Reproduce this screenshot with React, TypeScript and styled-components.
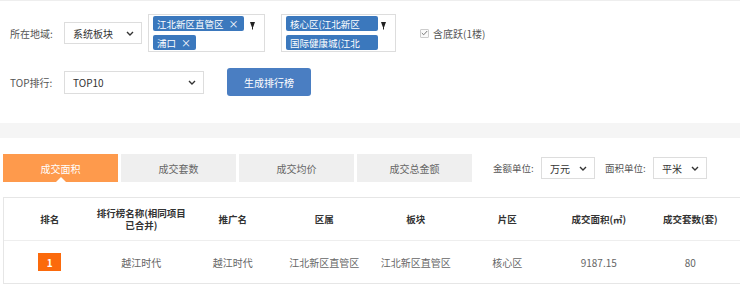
import styled, { createGlobalStyle } from "styled-components";

const GlobalStyle = createGlobalStyle`
  body {
    margin: 0;
    background: #fff;
    font-family: "Noto Sans CJK SC", "Noto Sans", sans-serif;
    font-size: 10px;
    color: #333;
  }
`;

function Chevron() {
  return (
    <svg width="8" height="5" viewBox="0 0 8 5">
      <polyline points="1,1 4,4 7,1" fill="none" stroke="#333" strokeWidth="1.4" />
    </svg>
  );
}

function Pin() {
  return (
    <svg width="5" height="8" viewBox="0 0 5 8">
      <polygon points="0,0 5,0 3.2,5 1.8,5" fill="#222" />
      <rect x="2" y="5" width="1" height="2.5" fill="#222" />
    </svg>
  );
}

const columns = ["排名", "排行榜名称(相同项目", "推广名", "区属", "板块", "片区", "成交面积(㎡)", "成交套数(套)"];

const row = {
  rank: 1,
  name: "越江时代",
  promo: "越江时代",
  district: "江北新区直管区",
  block: "江北新区直管区",
  area: "核心区",
  size: "9187.15",
  count: "80",
};

const tabs = ["成交面积", "成交套数", "成交均价", "成交总金额"];

function App() {
  return (
    <Page>
      <GlobalStyle />
      <TopPanel>
        <FormRow>
          <Label>所在地域:</Label>
          <Select $w={78}>
            <span>系统板块</span>
            <Chevron />
          </Select>
          <MultiBox $w={117} $ml={6}>
            <TagList>
              <Tag>
                江北新区直管区<Close>×</Close>
              </Tag>
              <Tag>
                浦口<Close>×</Close>
              </Tag>
            </TagList>
            <PinWrap>
              <Pin />
            </PinWrap>
          </MultiBox>
          <MultiBox $w={115} $ml={16}>
            <TagList>
              <Tag $fixed>核心区(江北新区</Tag>
              <Tag $fixed>国际健康城(江北</Tag>
            </TagList>
            <PinWrap>
              <Pin />
            </PinWrap>
          </MultiBox>
          <Check>
            <CheckBox>
              <svg width="7" height="6" viewBox="0 0 7 6">
                <polyline points="0.8,3 2.7,4.8 6.2,1" fill="none" stroke="#777" strokeWidth="1" />
              </svg>
            </CheckBox>
            含底跃(1楼)
          </Check>
        </FormRow>
        <FormRow $mt={16} $h={28}>
          <Label>TOP排行:</Label>
          <Select $w={140} $h={23}>
            <span>TOP10</span>
            <Chevron />
          </Select>
          <Button>生成排行榜</Button>
        </FormRow>
      </TopPanel>
      <Band />
      <TabSection>
        <TabBar>
          {tabs.map((t, i) => (
            <Tab key={t} $active={i === 0}>
              {t}
            </Tab>
          ))}
          <UnitLabel $ml={18}>金额单位:</UnitLabel>
          <Select $w={54}>
            <span>万元</span>
            <Chevron />
          </Select>
          <UnitLabel $ml={7}>面积单位:</UnitLabel>
          <Select $w={54}>
            <span>平米</span>
            <Chevron />
          </Select>
        </TabBar>
        <Table>
          <HeadRow>
            {columns.map((c, i) => (
              <HeadCell key={c}>
                {i === 1 ? (
                  <>
                    <HeadLine>{c}</HeadLine>
                    <HeadLine>已合并)</HeadLine>
                  </>
                ) : (
                  c
                )}
              </HeadCell>
            ))}
            <HeadCell />
          </HeadRow>
          <DataRow>
            <Cell>
              <Rank>{row.rank}</Rank>
            </Cell>
            <Cell>{row.name}</Cell>
            <Cell>{row.promo}</Cell>
            <Cell>{row.district}</Cell>
            <Cell>{row.block}</Cell>
            <Cell>{row.area}</Cell>
            <Cell>{row.size}</Cell>
            <Cell>{row.count}</Cell>
            <Cell />
          </DataRow>
        </Table>
      </TabSection>
    </Page>
  );
}
export default App;

const Page = styled.div`
  width: 740px;
  height: 284px;
  overflow: hidden;
  background: #fff;
`;

const TopPanel = styled.div`
  box-sizing: border-box;
  height: 123px;
  border-top: 1px solid #eee;
  padding: 13px 0 0 10px;
`;

const FormRow = styled.div<{ $mt?: number; $h?: number }>`
  display: flex;
  align-items: center;
  height: ${(p) => p.$h ?? 38}px;
  margin-top: ${(p) => p.$mt ?? 0}px;
`;

const Label = styled.span`
  width: 54px;
  flex-shrink: 0;
  color: #555;
`;

const Select = styled.div<{ $w: number; $h?: number }>`
  box-sizing: border-box;
  width: ${(p) => p.$w}px;
  height: ${(p) => p.$h ?? 22}px;
  border: 1px solid #ddd;
  background: #fff;
  display: flex;
  align-items: center;
  justify-content: space-between;
  padding: 0 7px 0 8px;
  color: #333;
  flex-shrink: 0;
`;

const MultiBox = styled.div<{ $w: number; $ml: number }>`
  box-sizing: border-box;
  width: ${(p) => p.$w}px;
  height: 38px;
  margin-left: ${(p) => p.$ml}px;
  border: 1px solid #ddd;
  padding: 1px 9px 0 4px;
  display: flex;
  justify-content: space-between;
  align-items: flex-start;
  flex-shrink: 0;
`;

const TagList = styled.div`
  display: flex;
  flex-direction: column;
  align-items: flex-start;
  gap: 4px;
`;

const Tag = styled.span<{ $fixed?: boolean }>`
  box-sizing: border-box;
  display: inline-flex;
  align-items: center;
  height: 15px;
  padding: 0 5px 0 4px;
  background: #3b78bd;
  color: #fff;
  font-size: 9.5px;
  border-radius: 2px;
  white-space: nowrap;
  overflow: hidden;
  ${(p) => (p.$fixed ? "width: 92px;" : "")}
`;

const Close = styled.span`
  margin-left: 5px;
  font-size: 10px;
`;

const PinWrap = styled.span`
  margin-top: 6px;
  display: flex;
`;

const Check = styled.label`
  display: flex;
  align-items: center;
  margin-left: 24px;
  color: #555;
`;

const CheckBox = styled.span`
  box-sizing: border-box;
  width: 9px;
  height: 9px;
  border: 1px solid #ccc;
  border-radius: 1px;
  background: #fafafa;
  margin-right: 4px;
  display: flex;
  align-items: center;
  justify-content: center;
`;

const Button = styled.button`
  margin-left: 23px;
  width: 84px;
  height: 28px;
  border: none;
  border-radius: 3px;
  background: #4a7ec2;
  color: #fff;
  font-family: inherit;
  font-size: 10px;
  padding: 0;
`;

const Band = styled.div`
  height: 15px;
  background: #f5f5f5;
`;

const TabSection = styled.div`
  padding: 16px 0 0 3px;
`;

const TabBar = styled.div`
  display: flex;
  align-items: center;
  height: 28px;
  gap: 3px;
`;

const Tab = styled.div<{ $active?: boolean }>`
  position: relative;
  width: 115px;
  height: 28px;
  flex-shrink: 0;
  display: flex;
  align-items: center;
  justify-content: center;
  background: ${(p) => (p.$active ? "#fe9a4c" : "#efefef")};
  color: ${(p) => (p.$active ? "#fff" : "#666")};
  &::after {
    content: "";
    display: ${(p) => (p.$active ? "block" : "none")};
    position: absolute;
    bottom: 0;
    left: 50%;
    margin-left: -5px;
    border-left: 5px solid transparent;
    border-right: 5px solid transparent;
    border-bottom: 5px solid #fff;
  }
`;

const UnitLabel = styled.span<{ $ml: number }>`
  box-sizing: border-box;
  width: 45px;
  margin-left: ${(p) => p.$ml}px;
  color: #555;
  font-size: 9.5px;
  white-space: nowrap;
  flex-shrink: 0;
`;

const Table = styled.div`
  margin-top: 15px;
  width: 800px;
  border: 1px solid #e6e6e6;
  border-right: none;
`;

const HeadRow = styled.div`
  display: grid;
  grid-template-columns: repeat(8, 91.5px) 1fr;
  align-items: center;
  height: 42px;
  border-bottom: 1px solid #eee;
`;

const HeadCell = styled.div`
  text-align: center;
  font-weight: bold;
  color: #333;
  font-size: 9.5px;
`;

const HeadLine = styled.div`
  line-height: 12px;
`;

const DataRow = styled.div`
  display: grid;
  grid-template-columns: repeat(8, 91.5px) 1fr;
  align-items: center;
  height: 42px;
`;

const Cell = styled.div`
  text-align: center;
  color: #666;
`;

const Rank = styled.span`
  display: inline-flex;
  align-items: center;
  justify-content: center;
  width: 23px;
  height: 18px;
  background: #fb6a0c;
  color: #fff;
  font-weight: bold;
`;
